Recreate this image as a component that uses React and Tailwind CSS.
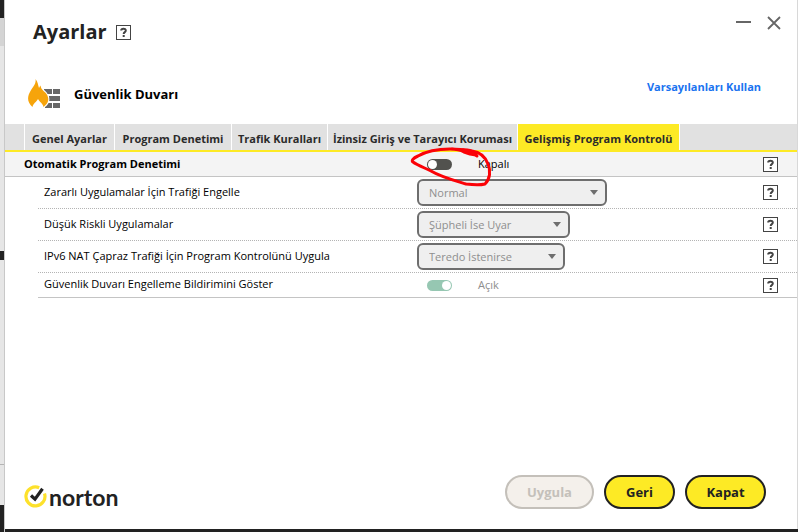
import React, { useState } from "react";

const tabs = [
  { label: "Genel Ayarlar", width: "w-[89px]" },
  { label: "Program Denetimi", width: "w-[116px]" },
  { label: "Trafik Kuralları", width: "w-[95px]" },
  { label: "İzinsiz Giriş ve Tarayıcı Koruması", width: "w-[189px]" },
  { label: "Gelişmiş Program Kontrolü", width: "w-[161px]" },
];

const selectRows = [
  {
    id: "malicious",
    label: "Zararlı Uygulamalar İçin Trafiği Engelle",
    value: "Normal",
    width: "w-[190px]",
  },
  {
    id: "low-risk",
    label: "Düşük Riskli Uygulamalar",
    value: "Şüpheli İse Uyar",
    width: "w-[153px]",
  },
  {
    id: "ipv6",
    label: "IPv6 NAT Çapraz Trafiği İçin Program Kontrolünü Uygula",
    value: "Teredo İstenirse",
    width: "w-[148px]",
  },
];

const HelpButton = () => (
  <button
    type="button"
    aria-label="Yardım"
    className="flex size-[15px] shrink-0 items-center justify-center border border-[#444] bg-white text-[#444]"
  >
    <svg viewBox="0 0 13 13" className="size-[13px]" fill="none">
      <path
        d="M4.2 4.6 C4.2 2.2 8.8 2.2 8.8 4.5 C8.8 6.2 6.7 6.1 6.7 8"
        stroke="currentColor"
        strokeWidth="2"
      />
      <rect x="5.7" y="9" width="2" height="2" fill="currentColor" />
    </svg>
  </button>
);

const Toggle = ({ id, checked, onChange, disabled }) => (
  <input
    id={id}
    type="checkbox"
    role="switch"
    checked={checked}
    onChange={onChange}
    disabled={disabled}
    className="flex h-[11px] w-[25px] shrink-0 appearance-none items-center rounded-full bg-[#52524e] px-px before:size-[9px] before:rounded-full before:bg-white before:content-[''] checked:justify-end checked:bg-[#2f9068] disabled:opacity-50"
  />
);

const FirewallIcon = () => (
  <svg viewBox="0 0 34 30" className="h-[30px] w-[34px]">
    <g fill="#676767">
      <rect x="16" y="10" width="8" height="5" />
      <rect x="25" y="10" width="7" height="5" />
      <rect x="17" y="17" width="3" height="5" />
      <rect x="21" y="17" width="11" height="5" />
      <rect x="17" y="24" width="7" height="5" />
      <rect x="25" y="24" width="7" height="5" />
    </g>
    <path
      d="M7.5 0 C8.5 5 4.5 8.5 2.5 12 C-1 18 -1 23 4.5 28 C5 24.5 8.5 23 10 20 C11.5 23 15 24.500 15.5 28 C21 24 21.500 19.500 18.500 15 C17 12.500 13 11 12.500 6.500 C11.500 7.500 11.500 8.500 11 9 C10 6 10 3 7.500 0Z"
      fill="#f6a40b"
      stroke="#fff"
      strokeWidth="2"
      paintOrder="stroke"
    />
  </svg>
);

const NortonLogo = () => (
  <div className="flex items-center gap-[2px] pb-px text-[#222]">
    <svg viewBox="0 0 23 23" className="size-[23px]" fill="none">
      <path
        d="M15.2 2.7 A9.500 9.500 0 1 0 20.500 8.500"
        stroke="#fde12b"
        strokeWidth="3.200"
      />
      <path
        d="M7 10.500 L11 14.200 L18.500 3.800"
        stroke="#222"
        strokeWidth="3.200"
      />
    </svg>
    <span className="font-['Lato',sans-serif] text-[23px] leading-5 font-bold">
      norton
    </span>
  </div>
);

// Red pen mark drawn around the main switch
const PenMark = () => (
  <svg
    viewBox="410 146 84 42"
    className="pointer-events-none absolute -top-[6px] -left-[7px] z-10 h-[42px] w-[84px]"
    fill="none"
    stroke="#fb0207"
    strokeWidth="3"
    strokeLinecap="round"
    strokeLinejoin="round"
  >
    <path d="M476 155 L470 154 L464 152 C461 150 456 149 450 149 C438 149 425 152 418 156 C413 158 411 161 413 162 C417 165 425 168 431 171 C441 177 456 181 466 184 C474 185 481 185 485 184 C490 179 491 171 488 164 C485 156 479 152 472 151 C466 149 459 150 452 149" />
    <path d="M463 150 C469 152 474 153 477 156" />
  </svg>
);

const App = () => {
  const [activeTab, setActiveTab] = useState(4);
  const [auto, setAuto] = useState(false);

  return (
    <div className="flex min-h-screen bg-[#222] font-['Open_Sans','Noto_Sans',sans-serif] text-[11px] leading-4 text-black">
      {/* Window behind the dialog */}
      <div className="flex w-[5px] shrink-0 flex-col border-r border-[#c8c8c8] bg-[#e6e6e6]">
        <div className="h-[18px] bg-[#222]"></div>
        <div className="h-7 bg-[#d4d4d4]"></div>
        <div className="h-[205px]"></div>
        <div className="h-[9px] bg-[#222]"></div>
        <div className="h-[205px] border-b border-[#b4b4b4]"></div>
        <div className="grow"></div>
        <div className="h-[27px] bg-[#222]"></div>
      </div>

      <div className="mb-[3px] flex grow flex-col border-r border-[#d8d8d8] bg-white">
        <header className="flex items-start justify-between pt-4 pr-4 pl-7">
          <div className="flex items-center gap-[9px]">
            <h1 className="text-[20px] leading-8 font-bold text-[#222]">
              Ayarlar
            </h1>
            <HelpButton />
          </div>
          <div className="flex items-center gap-4 text-[#666]">
            <button type="button" aria-label="Simge durumuna küçült">
              <svg viewBox="0 0 15 14" className="h-[14px] w-[15px]">
                <path d="M0 6 H15" stroke="currentColor" strokeWidth="2" />
              </svg>
            </button>
            <button type="button" aria-label="Pencereyi kapat">
              <svg viewBox="0 0 14 14" className="size-[14px]">
                <path
                  d="M1 1 L13 13 M13 1 L1 13"
                  stroke="currentColor"
                  strokeWidth="1.8"
                />
              </svg>
            </button>
          </div>
        </header>

        <div className="mt-[31px] flex items-start justify-between pr-9 pl-[23px]">
          <div className="flex items-center gap-3">
            <FirewallIcon />
            <h2 className="text-[13px] font-bold">Güvenlik Duvarı</h2>
          </div>
          <a href="#defaults" className="font-bold text-[#1a73f0]">
            Varsayılanları Kullan
          </a>
        </div>

        <div
          role="tablist"
          className="mt-[15px] flex h-7 border-b-2 border-[#fdea25] bg-[#e1e1e1] pl-[19px]"
        >
          <div className="w-px bg-white"></div>
          {tabs.map((tab, i) => (
            <button
              key={tab.label}
              type="button"
              role="tab"
              aria-selected={i === activeTab}
              onClick={() => setActiveTab(i)}
              className={`${tab.width} box-content shrink-0 border-r border-white pt-1 text-center font-bold whitespace-nowrap text-[#2b2b2b] ${
                i === activeTab ? "bg-[#fdea25]" : ""
              }`}
            >
              {tab.label}
            </button>
          ))}
        </div>

        <div className="flex h-[25px] items-center border-b border-[#c4c4c4] bg-[#f4f4f4] px-[19px]">
          <label htmlFor="auto" className="w-[393px] shrink-0 font-bold">
            Otomatik Program Denetimi
          </label>
          <div className="relative flex h-full grow items-center gap-[26px] pl-[10px]">
            <Toggle
              id="auto"
              checked={auto}
              onChange={(e) => setAuto(e.target.checked)}
            />
            <span>{auto ? "Açık" : "Kapalı"}</span>
            <PenMark />
          </div>
          <HelpButton />
        </div>

        <div className="ml-[33px] border-b border-[#c4c4c4]">
          {selectRows.map((row) => (
            <div
              key={row.id}
              className="flex h-8 items-center border-b border-dotted border-[#b4b4b4] pr-[19px] pl-[6px]"
            >
              <label htmlFor={row.id} className="w-[373px] shrink-0 pb-[2px]">
                {row.label}
              </label>
              <div className="grow">
                <div className={`${row.width} relative`}>
                  <select
                    id={row.id}
                    disabled
                    className="block h-[27px] w-full appearance-none rounded-md border-2 border-[#6e6e6e] bg-[#efefef] pl-[10px] text-[#8e8e8e]"
                  >
                    <option>{row.value}</option>
                  </select>
                  <svg
                    viewBox="0 0 8 5"
                    className="pointer-events-none absolute top-[11px] right-[9px] h-[5px] w-2"
                  >
                    <path d="M0 0 H8 L4 5Z" fill="#6e6e6e" />
                  </svg>
                </div>
              </div>
              <HelpButton />
            </div>
          ))}
          <div className="flex h-6 items-center pr-[19px] pl-[6px]">
            <label htmlFor="notify" className="w-[373px] shrink-0 pb-[2px]">
              Güvenlik Duvarı Engelleme Bildirimini Göster
            </label>
            <div className="flex grow items-center gap-[26px] pl-[10px]">
              <Toggle id="notify" checked disabled onChange={() => {}} />
              <span className="text-[#8e8e8e]">Açık</span>
            </div>
            <HelpButton />
          </div>
        </div>

        <footer className="mt-auto flex items-end justify-between pr-[31px] pb-5 pl-[19px]">
          <NortonLogo />
          <div className="flex gap-[10px] text-[13px] font-bold">
            <button
              type="button"
              disabled
              className="h-[34px] w-[89px] rounded-full border-2 border-[#c4c0ba] bg-[#f4f0eb] text-[#c4c0ba]"
            >
              Uygula
            </button>
            <button
              type="button"
              className="h-[34px] w-[71px] rounded-full border-2 border-[#222] bg-[#fdea25] text-[#222]"
            >
              Geri
            </button>
            <button
              type="button"
              className="h-[34px] w-[81px] rounded-full border-2 border-[#222] bg-[#fdea25] text-[#222]"
            >
              Kapat
            </button>
          </div>
        </footer>
      </div>
    </div>
  );
};

export default App;
